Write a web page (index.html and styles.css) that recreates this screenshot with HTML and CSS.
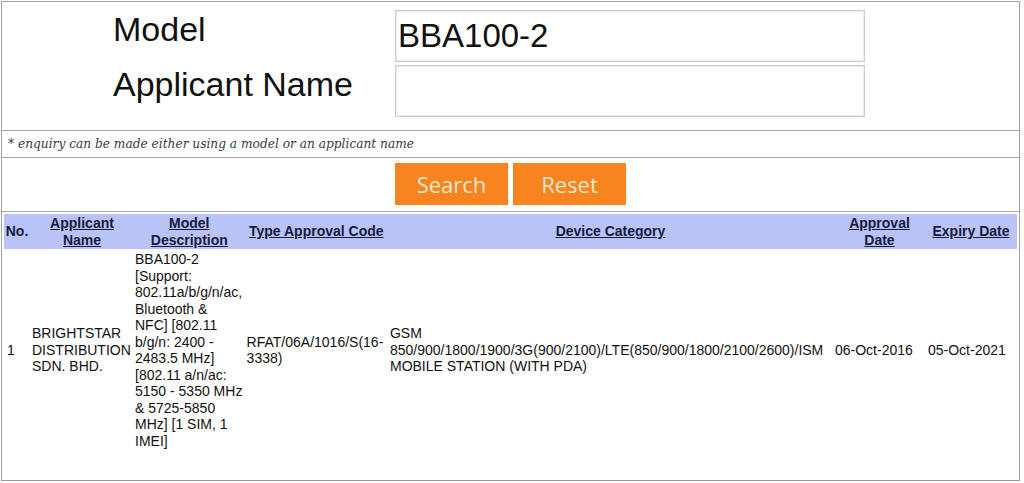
FILE: index.html
```html
<!DOCTYPE html>
<html>
<head>
<meta charset="utf-8">
<title>Type Approval Search</title>
<link rel="stylesheet" href="styles.css">
</head>
<body>
<div class="frame">
  <div class="form-section">
    <label class="field-label" for="model">Model</label>
    <input class="field-input" id="model" type="text" value="BBA100-2">
    <label class="field-label" for="applicant">Applicant Name</label>
    <input class="field-input" id="applicant" type="text" value="">
  </div>
  <div class="note-row">* enquiry can be made either using a model or an applicant name</div>
  <div class="button-row">
    <button class="btn" type="button">Search</button>
    <button class="btn" type="button">Reset</button>
  </div>
  <table class="results">
    <colgroup>
      <col class="c-no">
      <col class="c-app">
      <col class="c-model">
      <col class="c-code">
      <col class="c-cat">
      <col class="c-appr">
      <col class="c-exp">
    </colgroup>
    <thead>
      <tr>
        <th>No.</th>
        <th><a href="#">Applicant Name</a></th>
        <th><a href="#">Model Description</a></th>
        <th><a href="#">Type Approval Code</a></th>
        <th><a href="#">Device Category</a></th>
        <th><a href="#">Approval Date</a></th>
        <th><a href="#">Expiry Date</a></th>
      </tr>
    </thead>
    <tbody>
      <tr>
        <td class="cell-no">1</td>
        <td>BRIGHTSTAR DISTRIBUTION SDN. BHD.</td>
        <td>BBA100-2 [Support: 802.11a/b/g/n/ac, Bluetooth &amp; NFC] [802.11 b/g/n: 2400 - 2483.5 MHz] [802.11 a/n/ac: 5150 - 5350 MHz &amp; 5725-5850 MHz] [1 SIM, 1 IMEI]</td>
        <td>RFAT/06A/1016/S(16-3338)</td>
        <td class="cell-cat">GSM 850/900/1800/1900/3G(900/2100)/LTE(850/900/1800/2100/2600)/ISM MOBILE STATION (WITH PDA)</td>
        <td>06-Oct-2016</td>
        <td class="cell-exp">05-Oct-2021</td>
      </tr>
    </tbody>
  </table>
</div>
</body>
</html>
```

FILE: styles.css
```css
html, body {
  margin: 0;
  padding: 0;
  background: #ffffff;
}

body {
  font-family: "Liberation Sans", Arial, sans-serif;
  color: #111111;
}

.frame {
  margin: 1px 0 0 1px;
  width: 1019px;
  height: 480px;
  box-sizing: border-box;
  border: 1px solid #a3a3a3;
  border-bottom-color: #9a9a9a;
  display: flex;
  flex-direction: column;
}

.form-section {
  display: grid;
  grid-template-columns: 282px 470px;
  grid-auto-rows: 52px;
  row-gap: 3px;
  padding: 8px 0 13px 111px;
  border-bottom: 1px solid #a8a8a8;
}

.field-label {
  align-self: start;
  font-size: 34px;
  line-height: normal;
  color: #111111;
}

.field-input {
  box-sizing: border-box;
  width: 470px;
  height: 52px;
  margin: 0;
  border: 1px solid #cccccc;
  box-shadow: inset 0 0 0 1px #ececec;
  padding: 0 2px;
  font-family: "Liberation Sans", Arial, sans-serif;
  font-size: 33px;
  color: #111111;
  background: #ffffff;
  outline: none;
}

.note-row {
  height: 26px;
  display: flex;
  align-items: center;
  padding-left: 6px;
  font-family: "DejaVu Serif", "Liberation Serif", serif;
  font-style: italic;
  font-size: 12.2px;
  color: #3a3a3a;
  border-bottom: 1px solid #a8a8a8;
}

.button-row {
  display: flex;
  gap: 5px;
  padding: 5px 0 6px 393px;
  border-bottom: 1px solid #a8a8a8;
}

.btn {
  width: 113px;
  height: 42px;
  margin: 0;
  border: none;
  background: #f7841f;
  color: #fde6cf;
  font-family: "Open Sans", "Noto Sans", sans-serif;
  font-size: 22px;
  padding: 0;
}

.results {
  margin: 2px 0 0 2px;
  width: 1013px;
  table-layout: fixed;
  border-collapse: separate;
  border-spacing: 0;
  font-size: 14px;
  line-height: 16.5px;
}

.c-no { width: 27px; }
.c-app { width: 103px; }
.c-model { width: 111.6px; }
.c-code { width: 142.4px; }
.c-cat { width: 446px; }
.c-appr { width: 92px; }
.c-exp { width: 91px; }

.results th {
  background: #b9c3f7;
  padding: 1px 2px 1px 1px;
  height: 33px;
  font-weight: bold;
  text-align: center;
  vertical-align: middle;
  color: #161a3e;
}

.results th a {
  color: #161a3e;
  text-decoration: underline;
}

.results td {
  padding: 2px 2px 0 1px;
  vertical-align: middle;
  text-align: left;
  color: #111111;
}

.results td.cell-no {
  padding-left: 3px;
}

.results td.cell-cat,
.results td.cell-exp {
  padding-left: 2px;
}
```
